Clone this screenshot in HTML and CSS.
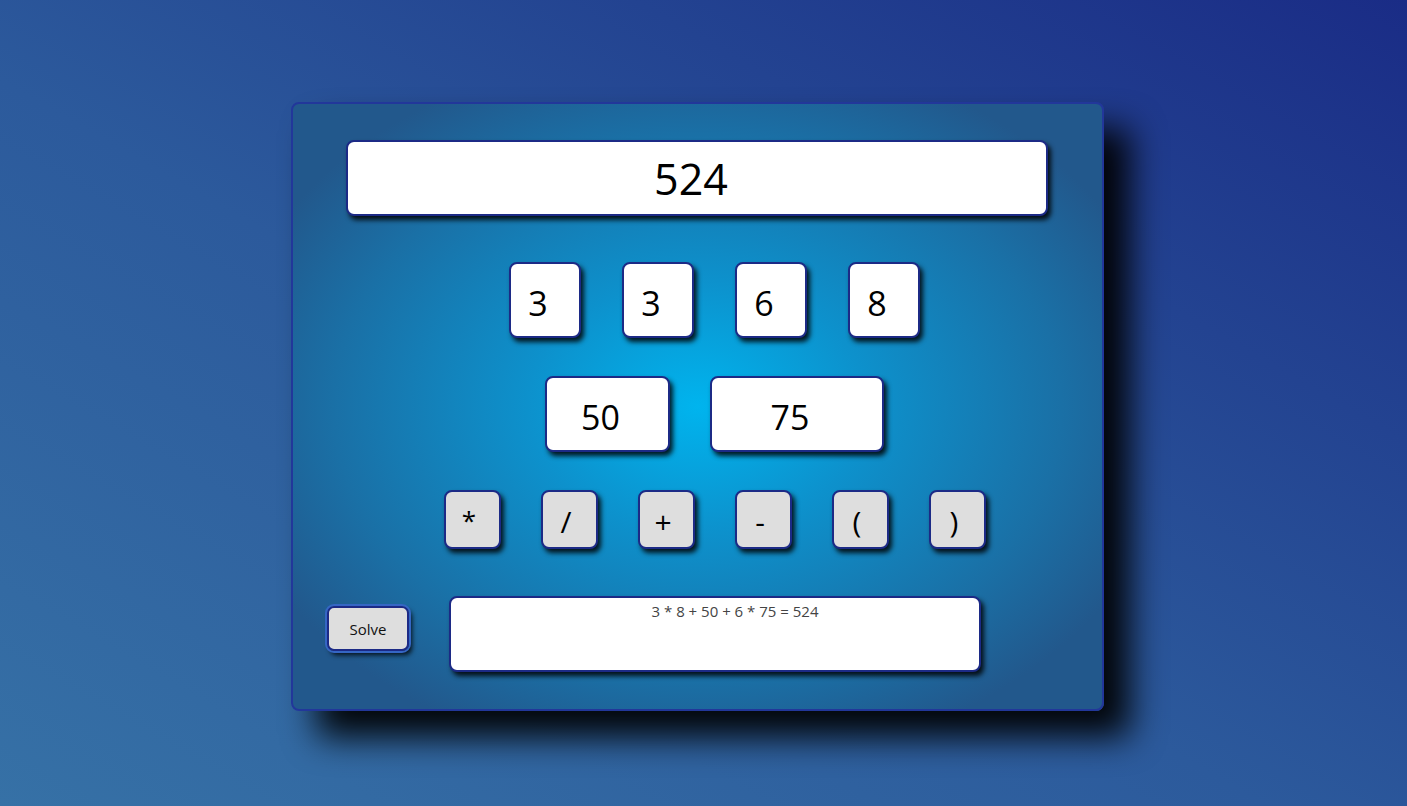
FILE: index.html
```html
<!DOCTYPE html>
<html lang="en">
<head>
<meta charset="utf-8">
<title>Countdown Numbers</title>
<link rel="stylesheet" href="styles.css">
</head>
<body>
  <main class="card">
    <div class="target">524</div>
    <div class="rows">
      <div class="row row-small">
        <div class="tile small">3</div>
        <div class="tile small">3</div>
        <div class="tile small">6</div>
        <div class="tile small">8</div>
      </div>
      <div class="row row-large">
        <div class="tile large w50">50</div>
        <div class="tile large w75">75</div>
      </div>
      <div class="row row-ops">
        <button class="op op-star">*</button>
        <button class="op">/</button>
        <button class="op">+</button>
        <button class="op">-</button>
        <button class="op">(</button>
        <button class="op">)</button>
      </div>
    </div>
    <div class="bottom">
      <button class="solve">Solve</button>
      <div class="result">3 * 8 + 50 + 6 * 75 = 524</div>
    </div>
  </main>
</body>
</html>
```

FILE: styles.css
```css
html, body {
  margin: 0;
  height: 100%;
}
body {
  background: linear-gradient(to top right, #3671a6 0%, #2c5a9c 45%, #1a2c86 100%);
  font-family: "Open Sans", "Noto Sans", sans-serif;
  display: flex;
  justify-content: flex-start;
  align-items: flex-start;
  padding: 102px 0 0 291px;
  box-sizing: border-box;
}
.card {
  width: 813px;
  height: 609px;
  box-sizing: border-box;
  border: 2px solid #22379a;
  border-radius: 8px;
  background: radial-gradient(ellipse 60% 60% at 50% 50%, #00b4ee 0%, #0d91cc 35%, #1a70a6 75%, #22588c 100%);
  box-shadow: 26px 26px 34px rgba(0, 0, 0, 0.95);
  padding: 36px 0 0 53px;
  display: flex;
  flex-direction: column;
}
.target {
  width: 702px;
  height: 76px;
  box-sizing: border-box;
  background: #fff;
  border: 2px solid #1c2a86;
  border-radius: 8px;
  box-shadow: 3px 4px 5px rgba(0, 0, 0, 0.85);
  font-size: 43px;
  line-height: 74px;
  text-align: center;
  color: #000;
  padding-right: 12px;
}
.rows {
  width: 809px;
  margin-left: -53px;
  padding-left: 34px;
  box-sizing: border-box;
  display: flex;
  flex-direction: column;
  margin-top: 46px;
  gap: 38px;
}
.row {
  display: flex;
  justify-content: center;
  gap: 41px;
}
.row-large {
  gap: 40px;
}
.tile {
  height: 76px;
  box-sizing: border-box;
  background: #fff;
  border: 2px solid #1c2a86;
  border-radius: 8px;
  box-shadow: 3px 4px 5px rgba(0, 0, 0, 0.85);
  font-size: 34px;
  line-height: 78px;
  text-align: center;
  color: #000;
  padding-right: 14px;
}
.small { width: 72px; }
.w50 { width: 125px; }
.w75 { width: 174px; }
.op {
  width: 57px;
  height: 59px;
  box-sizing: border-box;
  background: #dedede;
  border: 2px solid #1c2a86;
  border-radius: 8px;
  box-shadow: 3px 4px 5px rgba(0, 0, 0, 0.85);
  font-family: "Open Sans", "Noto Sans", sans-serif;
  font-size: 30px;
  line-height: 60px;
  padding: 0 6px 0 0;
  color: #000;
}
.op-star {
  font-size: 26px;
  line-height: 56px;
}
.row-ops { gap: 40px; }
.bottom {
  margin-top: 47px;
  margin-left: -19px;
  display: flex;
  align-items: flex-start;
}
.solve {
  margin-top: 10px;
  width: 82px;
  height: 45px;
  box-sizing: border-box;
  background: #dedede;
  border: 2px solid #1c2a86;
  border-radius: 7px;
  outline: 2px solid #3566c4;
  box-shadow: 3px 4px 5px rgba(0, 0, 0, 0.85);
  font-family: "Open Sans", "Noto Sans", sans-serif;
  font-size: 15px;
  color: #111;
  padding: 0;
}
.result {
  margin-left: 40px;
  width: 532px;
  height: 76px;
  box-sizing: border-box;
  background: #fff;
  border: 2px solid #1c2a86;
  border-radius: 8px;
  box-shadow: 3px 4px 5px rgba(0, 0, 0, 0.85);
  font-size: 15px;
  color: #444;
  text-align: center;
  padding: 3px 0 0 40px;
}
```
